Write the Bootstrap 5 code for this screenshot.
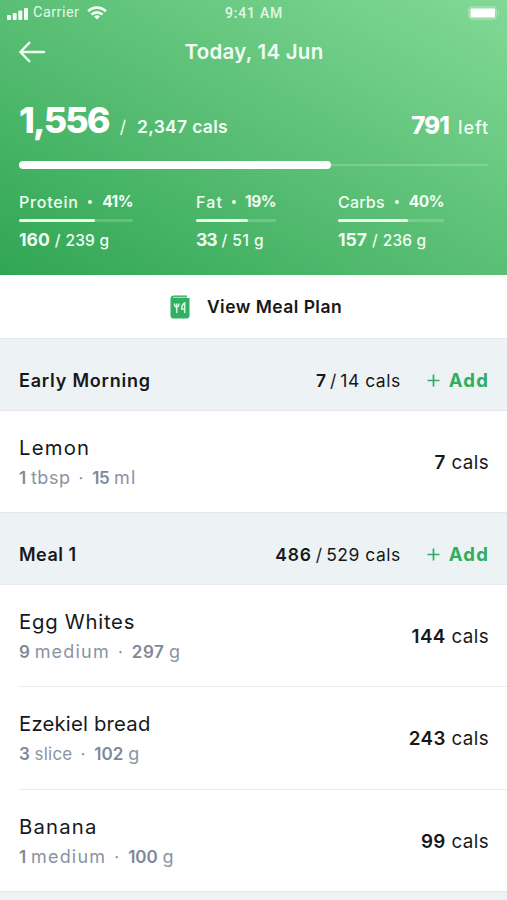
<!DOCTYPE html>
<html lang="en">
<head>
<meta charset="utf-8">
<meta name="viewport" content="width=device-width, initial-scale=1">
<title>Today, 14 Jun</title>
<link rel="stylesheet" href="https://cdn.jsdelivr.net/npm/bootstrap@5.3.0/dist/css/bootstrap.min.css">
<style>
body{font-family:Inter,"Open Sans",sans-serif;color:#17181a;line-height:1;font-size:17.5px}
span{white-space:nowrap}
.hero{height:275px;padding:0 18px 0 19px;color:#f1fdf3;background:linear-gradient(to bottom left,#82d996,#5abf75 50%,#30a653)}
.thirds{display:grid;grid-template-columns:1fr auto 1fr}
.status{height:26px;margin:0 -12px;font-family:Roboto,sans-serif;color:#e2f8e6}
.status .clock{font-size:14px;font-weight:500;letter-spacing:.8px}
.status .carrier{font-size:14.5px;letter-spacing:.45px;padding-top:1px;margin-left:5px}
.title-row{height:52px}
.title-row h1{font-size:20.5px;font-weight:600;letter-spacing:.25px}
.totals{height:60px}
.total-main{font-size:36px;font-weight:800;letter-spacing:-1.9px;color:#fff}
.total-left{font-size:24px;font-weight:800;letter-spacing:-.9px;color:#fff}
.slash{margin-left:11px}
.goal{font-weight:600;letter-spacing:.3px;margin-left:11px}
.left-label{font-size:18px;font-weight:500;letter-spacing:.9px;margin:0 0 0 9px}
.goal-track{height:8px;margin-top:23px}
.goal-track::before{content:"";position:absolute;left:0;right:0;top:3px;height:2px;border-radius:1px;background:#ffffff30}
.goal-fill{height:8px;border-radius:4px;background:#fff;position:relative}
.macros{margin-top:25px}
.protein{width:177px}.protein .meter{width:114px}
.fat{width:142px}.fat .meter{width:80px}
.carbs .meter{width:106px}
.macro-name{font-size:15.5px;font-weight:600;height:16px}
.macro-name .label{font-size:16px;font-weight:500}
.dot{width:4px;height:4px;border-radius:50%;background:currentColor}
.macro-bar{height:3px;margin-top:9px;border-radius:2px;background:#ffffff30}
.macro-bar div{height:3px;border-radius:2px;background:#e9fbec}
.macro-sum{font-size:15.5px;font-weight:500;height:18px;margin-top:9px}
.macro-sum b{font-size:17.5px}
.macro-sum .of{margin:0 5px}
.plan{height:63px;padding-left:5px;font-weight:600;letter-spacing:.45px}
.plan-text{margin-left:17px}
.meal-head{height:73px;padding:12px 19px 0;background:#edf2f5;border-top:1px solid #e3e8eb;border-bottom:1px solid #e6eaec}
.meal-head.next{height:9px;padding:0;border-bottom:0}
.meal-name{font-size:18px}
.add{color:#2fae5f;font-weight:700;margin-left:26px}
.add .word{font-size:18.5px;letter-spacing:1.2px;margin:0 -1px 0 9px}
.food{height:102px;margin-left:19px;padding-right:18px;border-bottom:1px solid #e9ebed}
.food.tall{height:103px}
.food.final{height:101px;border-bottom:0}
.food-name{font-size:20.3px;letter-spacing:.75px;line-height:24px}
.food-note{font-size:17px;color:#8a93a4;line-height:20px;margin-top:8px}
.food-note b{font-weight:600;color:#7f8899}
.food-note .unit{font-size:18px}
.food-note .sep{margin:0 9px 0 8px}
.kcal{font-size:18.8px;letter-spacing:.4px;padding-top:3px}
b{font-weight:700}
.kcal b,.meal-head b{font-weight:600}
.n-15{letter-spacing:-1px}.n-05{letter-spacing:-.5px}.p-02{letter-spacing:.2px}.p-05{letter-spacing:.5px}.p-08{letter-spacing:.8px}.p-12{letter-spacing:1.2px}
</style>
<script src="https://cdn.jsdelivr.net/npm/bootstrap@5.3.0/dist/js/bootstrap.bundle.min.js"></script>
</head>
<body class="bg-white">
<header class="hero">
  <div class="status thirds align-items-center">
    <div class="d-flex align-items-center">
      <svg width="21" height="13" viewBox="0 0 21 13" fill="#f4fff5"><rect x="0" y="8" width="4" height="5" rx="1"/><rect x="5.7" y="6" width="4" height="7" rx="1"/><rect x="11.3" y="3.5" width="4" height="9.5" rx="1"/><rect x="17" y="1" width="4" height="12" rx="1"/></svg>
      <span class="carrier">Carrier</span>
      <svg class="ms-2" width="20" height="14" viewBox="0 0 20 14" fill="none" stroke="#f4fff5" stroke-width="2.6"><path d="M1.2 5.3a12.4 12.4 0 0 1 17.6 0M4.5 8.600a7.8 7.8 0 0 1 11 0"/><path d="M10 13.500 7 10.600a4.3 4.3 0 0 1 6 0z" fill="#f4fff5" stroke="none"/></svg>
    </div>
    <span class="clock">9:41 AM</span>
    <svg class="ms-auto" width="33" height="14" viewBox="0 0 33 14"><rect x=".5" y=".5" width="28" height="13" rx="3" fill="#ffffff30" stroke="#ffffff30"/><rect x="2.5" y="2.5" width="24.5" height="9" rx="1" fill="#fff"/><path d="M30 4.500q2 2.500 0 5z" fill="#ffffff60"/></svg>
  </div>
  <div class="title-row thirds align-items-center">
    <svg width="27" height="22" viewBox="0 0 27 22" fill="none" stroke="#effdf1" stroke-width="2.4" stroke-linecap="round" stroke-linejoin="round"><path d="M25 11H1.500M10.300 1.800 1.300 11l9 9.200"/></svg>
    <h1 class="m-0">Today, 14 Jun</h1>
  </div>
  <div class="totals d-flex align-items-end justify-content-between">
    <div class="d-flex align-items-baseline"><span class="total-main">1,556</span><span class="slash">/</span><span class="goal">2,347 cals</span></div>
    <div class="d-flex align-items-baseline"><span class="total-left">791</span><span class="left-label">left</span></div>
  </div>
  <div class="goal-track position-relative"><div class="goal-fill" style="width:66.3%"></div></div>
  <div class="macros d-flex">
    <div class="protein"><div class="meter">
      <div class="macro-name d-flex justify-content-between align-items-center"><span class="label p-08">Protein</span><span class="dot"></span><b class="n-05">41%</b></div>
      <div class="macro-bar"><div style="width:67%"></div></div></div>
      <div class="macro-sum d-flex align-items-baseline"><b>160</b><span class="of">/</span><span class="p-02">239 g</span></div>
    </div>
    <div class="fat"><div class="meter">
      <div class="macro-name d-flex justify-content-between align-items-center"><span class="label p-12">Fat</span><span class="dot"></span><b class="n-05">19%</b></div>
      <div class="macro-bar"><div style="width:64.7%"></div></div></div>
      <div class="macro-sum d-flex align-items-baseline"><b class="n-15">33</b><span class="of">/</span><span class="p-05">51 g</span></div>
    </div>
    <div class="carbs"><div class="meter">
      <div class="macro-name d-flex justify-content-between align-items-center"><span class="label p-02">Carbs</span><span class="dot"></span><b class="n-05">40%</b></div>
      <div class="macro-bar"><div style="width:66.5%"></div></div></div>
      <div class="macro-sum d-flex align-items-baseline"><b>157</b><span class="of">/</span><span class="p-02">236 g</span></div>
    </div>
  </div>
</header>
<a class="plan d-flex align-items-center justify-content-center text-reset text-decoration-none" href="#">
  <svg width="20" height="24" viewBox="0 0 20 24"><path d="M.5 4Q.5.5 4 .5H17V3h2.500V20.500q0 3-3 3h-13q-3 0-3-3z" fill="#2fb062"/><path d="M3 2.300H17" stroke="#b9e8c8" stroke-width="1"/><path d="M4.500 8.500q0 3.500 2.200 3.500T9 8.500M6.700 8.500V18M14.700 18V8q-3.200 2-3 6h3" fill="none" stroke="#d5f5df" stroke-width="1.500"/></svg>
  <span class="plan-text">View Meal Plan</span>
</a>
<main>
  <section>
    <div class="meal-head d-flex align-items-center"><b class="meal-name p-08 me-auto">Early Morning</b><b>7</b><span class="mx-1">/</span><span class="p-05">14 cals</span><span class="add d-flex align-items-center"><svg width="13" height="13" viewBox="0 0 13 13" stroke="#2fae5f" stroke-width="1.7"><path d="M.5 6.500h12M6.500.5v12"/></svg><span class="word">Add</span></span></div>
    <div class="food final d-flex align-items-center justify-content-between">
      <div><div class="food-name p-12">Lemon</div><div class="food-note"><b>1</b> <span class="unit p-05">tbsp</span><span class="sep">·</span><b class="n-05">15</b> <span class="unit p-12">ml</span></div></div>
      <span class="kcal"><b>7</b> cals</span>
    </div>
  </section>
  <section>
    <div class="meal-head d-flex align-items-center"><b class="meal-name p-05 me-auto">Meal 1</b><b class="p-08">486</b><span class="mx-1">/</span><span class="p-05">529 cals</span><span class="add d-flex align-items-center"><svg width="13" height="13" viewBox="0 0 13 13" stroke="#2fae5f" stroke-width="1.7"><path d="M.5 6.500h12M6.500.5v12"/></svg><span class="word">Add</span></span></div>
    <div class="food d-flex align-items-center justify-content-between">
      <div><div class="food-name">Egg Whites</div><div class="food-note"><b>9</b> <span class="unit p-12">medium</span><span class="sep">·</span><b class="p-05">297</b> <span class="unit">g</span></div></div>
      <span class="kcal"><b>144</b> cals</span>
    </div>
    <div class="food tall d-flex align-items-center justify-content-between">
      <div><div class="food-name p-02">Ezekiel bread</div><div class="food-note"><b>3</b> <span class="p-02">slice</span><span class="sep">·</span><b>102</b> <span class="unit">g</span></div></div>
      <span class="kcal"><b>243</b> cals</span>
    </div>
    <div class="food final d-flex align-items-center justify-content-between">
      <div><div class="food-name p-12">Banana</div><div class="food-note"><b>1</b> <span class="unit p-12">medium</span><span class="sep">·</span><b>100</b> <span class="unit">g</span></div></div>
      <span class="kcal"><b>99</b> cals</span>
    </div>
  </section>
  <div class="meal-head next"></div>
</main>
</body>
</html>
